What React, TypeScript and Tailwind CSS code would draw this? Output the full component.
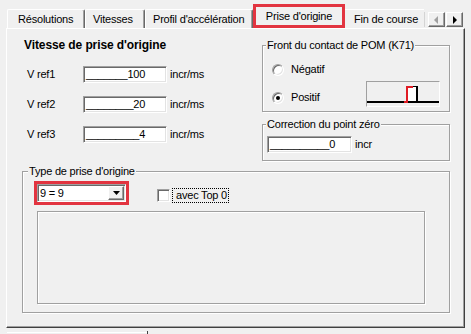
import React from "react";

const etched = "border border-[#a0a0a0] shadow-[inset_1px_1px_0_#ffffff,1px_1px_0_#ffffff]";
const sunken =
  "border border-t-[#a0a0a0] border-l-[#a0a0a0] border-r-white border-b-white shadow-[inset_1px_1px_0_#696969,inset_-1px_-1px_0_#e3e3e3]";
const raised =
  "border border-t-white border-l-white border-r-[#696969] border-b-[#696969] shadow-[inset_-1px_-1px_0_#a0a0a0]";

function Tab({ w, pl, children }: { w: string; pl: string; children: React.ReactNode }) {
  return (
    <div
      className={`self-end h-[19px] ${w} ${pl} flex items-center whitespace-nowrap overflow-hidden border-l border-t border-r border-l-white border-t-white border-r-[#696969] shadow-[inset_-1px_0_0_#a0a0a0] rounded-t-[2px]`}
    >
      {children}
    </div>
  );
}

function GroupBox({
  title,
  className,
  titleLeft,
  children,
}: {
  title: string;
  className: string;
  titleLeft: string;
  children?: React.ReactNode;
}) {
  return (
    <div className={`relative ${etched} ${className}`}>
      <span className={`absolute -top-[7px] ${titleLeft} px-[1px] bg-[#f0f0f0] leading-[13px] whitespace-nowrap`}>
        {title}
      </span>
      {children}
    </div>
  );
}

function Edit({ w, text }: { w: string; text: string }) {
  return (
    <div className={`${w} h-[17px] bg-white ${sunken} flex items-center pl-[2px] whitespace-pre overflow-hidden`}>
      {text}
    </div>
  );
}

function Radio({ checked }: { checked?: boolean }) {
  return (
    <div
      className={`w-[12px] h-[12px] rounded-full bg-white border border-t-[#a0a0a0] border-l-[#a0a0a0] border-r-white border-b-white shadow-[inset_1px_1px_0_#696969,inset_-1px_-1px_0_#e3e3e3] flex items-center justify-center`}
    >
      {checked ? <div className="w-[4px] h-[4px] rounded-full bg-black" /> : null}
    </div>
  );
}

export default function App() {
  return (
    <div className="w-[471px] h-[334px] bg-[#f0f0f0] overflow-hidden text-[11px] leading-[13px] text-black tracking-[-0.2px] font-['Liberation_Sans',Arial,sans-serif]">
      {/* Tab strip */}
      <div className="flex h-[28px] pl-[7px]">
        <Tab w="w-[78px]" pl="pl-[10px]">Résolutions</Tab>
        <Tab w="w-[60px]" pl="pl-[7px]">Vitesses</Tab>
        <Tab w="w-[108px]" pl="pl-[7px]">Profil d'accélération</Tab>
        <div className="self-end h-[24px] w-[92px] border-[3px] border-[#e23440] flex items-center justify-center whitespace-nowrap">
          Prise d'origine
        </div>
        <div className="self-end h-[19px] w-[79px] pl-[9px] flex items-center whitespace-nowrap overflow-hidden border-t border-t-white">
          Fin de course
        </div>
        <div className="mt-[12px] w-px h-[15px] bg-[#d4d4d4]" />
        <div className="mt-[12px] ml-[3px] flex gap-px">
          <div className={`w-[17px] h-[15px] bg-[#f0f0f0] ${raised} flex items-center justify-center`}>
            <svg width="5" height="8" viewBox="0 0 5 8">
              <path d="M4 0 L0 4 L4 8 Z" fill="#a0a0a0" />
            </svg>
          </div>
          <div className={`w-[17px] h-[15px] bg-[#f0f0f0] ${raised} flex items-center justify-center`}>
            <svg width="5" height="8" viewBox="0 0 5 8">
              <path d="M1 0 L5 4 L1 8 Z" fill="#000" />
            </svg>
          </div>
        </div>
      </div>

      {/* Panel */}
      <div className="ml-[6px] w-[459px] h-[300px] border border-t-white border-l-white border-r-[#404040] border-b-[#404040] shadow-[inset_-1px_-1px_0_#a0a0a0] pl-[15px]">
        <div className="flex">
          {/* Left column */}
          <div className="w-[240px] pt-[9px]">
            <div className="pl-[2px] font-bold text-[12px] leading-[14px] tracking-[-0.1px]">
              Vitesse de prise d'origine
            </div>
            <div className="mt-[14px] flex flex-col gap-[13px] pl-[5px]">
              <div className="flex items-center h-[17px]">
                <span className="w-[56px]">V ref1</span>
                <Edit w="w-[84px]" text="_______100" />
                <span className="ml-[3px]">incr/ms</span>
              </div>
              <div className="flex items-center h-[17px]">
                <span className="w-[56px]">V ref2</span>
                <Edit w="w-[84px]" text="________20" />
                <span className="ml-[3px]">incr/ms</span>
              </div>
              <div className="flex items-center h-[17px]">
                <span className="w-[56px]">V ref3</span>
                <Edit w="w-[84px]" text="_________4" />
                <span className="ml-[3px]">incr/ms</span>
              </div>
            </div>
          </div>

          {/* Right column */}
          <div className="w-[188px] pt-[16px]">
            <GroupBox title="Front du contact de POM (K71)" className="h-[67px] flex" titleLeft="left-[3px]">
              <div className="pl-[9px] pt-[17px] flex flex-col">
                <div className="flex items-center h-[13px]">
                  <Radio />
                  <span className="ml-[7px]">Négatif</span>
                </div>
                <div className="flex items-center h-[13px] mt-[15px]">
                  <Radio checked />
                  <span className="ml-[7px]">Positif</span>
                </div>
              </div>
              <div className={`ml-auto mr-[9px] mb-[4px] self-end w-[74px] h-[26px] bg-[#f0f0f0] border border-t-[#a0a0a0] border-l-[#a0a0a0] border-r-white border-b-white`}>
                <svg width="72" height="24" viewBox="0 0 72 24">
                  <rect x="0" y="19" width="72" height="2" fill="#000" />
                  <rect x="41" y="5" width="9" height="14" fill="#fff" />
                  <rect x="49" y="4" width="2" height="16" fill="#000" />
                  <rect x="45" y="4" width="5" height="1" fill="#000" />
                  <rect x="37" y="19" width="4" height="2" fill="#e01c24" />
                  <rect x="39" y="4" width="2" height="17" fill="#e01c24" />
                  <rect x="39" y="4" width="7" height="2" fill="#e01c24" />
                </svg>
              </div>
            </GroupBox>
            <GroupBox title="Correction du point zéro" className="mt-[12px] h-[37px]" titleLeft="left-[3px]">
              <div className="pl-[4px] pt-[11px] flex items-center">
                <Edit w="w-[85px]" text="__________0" />
                <span className="ml-[3px]">incr</span>
              </div>
            </GroupBox>
          </div>
        </div>

        {/* Type de prise d'origine */}
        <GroupBox title="Type de prise d'origine" className="mt-[10px] w-[428px] h-[142px]" titleLeft="left-[5px]">
          <div className="pl-[11px] pt-[9px]">
            <div className="flex items-start">
              <div className="w-[95px] h-[24px] border-[3px] border-[#e23440]">
                <div className={`w-[89px] h-[18px] bg-white ${sunken} flex items-center pl-[2px]`}>
                  <span className="flex-1">9 = 9</span>
                  <div className={`w-[16px] h-[14px] mr-px bg-[#f0f0f0] ${raised} flex items-center justify-center`}>
                    <svg width="7" height="4" viewBox="0 0 7 4">
                      <path d="M0 0 L7 0 L3.5 4 Z" fill="#000" />
                    </svg>
                  </div>
                </div>
              </div>
              <div className="ml-[28px] mt-[7px] h-[15px] flex items-center">
                <div className={`w-[13px] h-[13px] bg-white ${sunken}`} />
                <div className="ml-[2px] h-[15px] border border-dotted border-black pl-[3px] pr-[1px] flex items-center">
                  avec Top 0
                </div>
              </div>
            </div>
            <div className={`ml-[3px] mt-[6px] w-[388px] h-[93px] ${etched}`} />
          </div>
        </GroupBox>
      </div>

      {/* bottom sliver */}
      <div className="flex mt-[3px] ml-[7px] items-start">
        <div className="w-[140px] h-px mt-[1px] bg-white" />
        <div className="w-px h-[3px] bg-[#404040]" />
      </div>
    </div>
  );
}
